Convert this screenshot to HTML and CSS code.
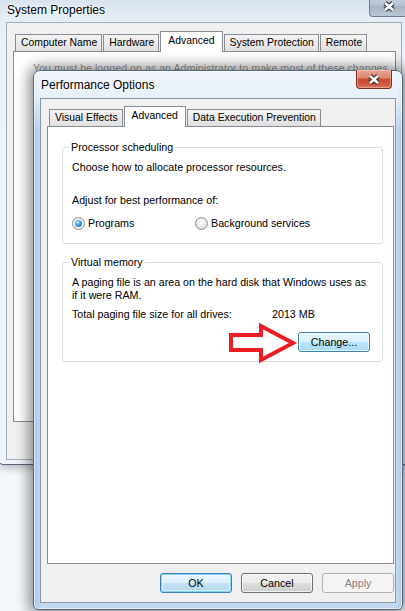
FILE: index.html
```html
<!DOCTYPE html>
<html lang="en">
<head>
    <meta charset="UTF-8">
    <meta name="viewport" content="width=device-width, initial-scale=1.0">
    <title>Performance Options</title>
    <link rel="stylesheet" href="styles.css">
</head>
<body>
    <div class="desktop">

        <!-- parent window, inactive -->
        <div class="window sysprops">
            <div class="titlebar">
                <span class="title">System Properties</span>
                <span class="close-btn">
                    <svg width="14" height="11" viewBox="0 0 14 11">
                        <path d="M3 2 L11 9 M11 2 L3 9" stroke="#3a4350" stroke-width="5" fill="none"/>
                        <path d="M3 2 L11 9 M11 2 L3 9" stroke="#fff" stroke-width="2.6" fill="none"/>
                    </svg>
                </span>
            </div>
            <div class="client">
                <div class="tabs">
                    <div class="tab">Computer Name</div>
                    <div class="tab">Hardware</div>
                    <div class="tab active">Advanced</div>
                    <div class="tab">System Protection</div>
                    <div class="tab">Remote</div>
                </div>
                <div class="tab-panel">
                    <p class="notice">You must be logged on as an Administrator to make most of these changes.</p>
                </div>
            </div>
        </div>

        <!-- active dialog -->
        <div class="window perf">
            <div class="titlebar">
                <span class="title">Performance Options</span>
                <span class="close-btn red">
                    <svg width="14" height="11" viewBox="0 0 14 11">
                        <path d="M3 2 L11 9 M11 2 L3 9" stroke="#3b2a28" stroke-width="5" fill="none"/>
                        <path d="M3 2 L11 9 M11 2 L3 9" stroke="#fff" stroke-width="2.6" fill="none"/>
                    </svg>
                </span>
            </div>
            <div class="client">
                <div class="tabs">
                    <div class="tab">Visual Effects</div>
                    <div class="tab active">Advanced</div>
                    <div class="tab">Data Execution Prevention</div>
                </div>
                <div class="tab-panel">
                    <fieldset class="group">
                        <legend>Processor scheduling</legend>
                        <p>Choose how to allocate processor resources.</p>
                        <p class="spaced">Adjust for best performance of:</p>
                        <div class="radio-row">
                            <label class="radio checked"><span class="radio-dot"></span>Programs</label>
                            <label class="radio"><span class="radio-dot"></span>Background services</label>
                        </div>
                    </fieldset>

                    <fieldset class="group vm">
                        <legend>Virtual memory</legend>
                        <p class="nowrap">A paging file is an area on the hard disk that Windows uses as<br>if it were RAM.</p>
                        <div class="size-row">
                            <span class="size-label">Total paging file size for all drives:</span>
                            <span>2013 MB</span>
                        </div>
                        <div class="change-row">
                            <svg class="arrow" width="74" height="44" viewBox="0 0 74 44">
                                <polygon points="5,14 35,14 35,5 67,22 35,39 35,29 5,29" fill="#fff" stroke="#ed1c24" stroke-width="4"/>
                            </svg>
                            <button class="btn hot">Change...</button>
                        </div>
                    </fieldset>
                </div>
                <div class="dialog-buttons">
                    <button class="btn default">OK</button>
                    <button class="btn">Cancel</button>
                    <button class="btn" disabled>Apply</button>
                </div>
            </div>
        </div>

    </div>
</body>
</html>
```

FILE: styles.css
```css
* {
    box-sizing: border-box;
}

body {
    margin: 0;
    font-family: "Liberation Sans", Arial, sans-serif;
    font-size: 10.7px;
    color: #000;
    background: #fff;
}

/* the screen */
.desktop {
    position: relative;
    width: 405px;
    height: 611px;
    overflow: hidden;
    background: #f3f8fc;
}

/* window frames (aero) */
.window {
    position: absolute;
    display: flex;
    flex-direction: column;
    border: 1px solid #57667a;
    border-radius: 7px 7px 5px 5px;
}

.sysprops {
    left: -2px;
    top: -8px;
    width: 412px;
    height: 473px;
    background: linear-gradient(to bottom, #d3dfeb 0, #e4edf6 24px, #ebf2f9 60px, #eef4fa 100%);
    box-shadow: 0 3px 8px rgba(0, 0, 0, 0.25);
}

.perf {
    left: 33px;
    top: 70px;
    width: 370px;
    height: 540px;
    background:
        linear-gradient(to bottom, rgba(255, 255, 255, 0.75) 0, rgba(255, 255, 255, 0.6) 27px, rgba(255, 255, 255, 0) 60px),
        linear-gradient(to right, #a9c9ec 0, #c3d8ef 7px, #c3d8ef 363px, #a9c9ec 100%);
    box-shadow: 0 0 14px 4px rgba(0, 0, 0, 0.45), inset 0 0 0 1px rgba(255, 255, 255, 0.55);
}

.titlebar {
    display: flex;
    justify-content: space-between;
    align-items: center;
    flex-shrink: 0;
}

.sysprops .titlebar {
    height: 29px;
    padding: 4px 0 0 8px;
}

.perf .titlebar {
    height: 27px;
    padding: 0 10px 0 7px;
}

.title {
    font-size: 12px;
    text-shadow: 0 0 6px #fff, 0 0 3px #fff;
}

.close-btn {
    align-self: flex-start;
    display: flex;
    align-items: center;
    justify-content: center;
    margin-top: -1px;
    border: 1px solid #6f7c8c;
    border-top: none;
    border-radius: 0 0 4px 4px;
}

.sysprops .close-btn {
    width: 40px;
    height: 21px;
    background: linear-gradient(to bottom, #c9d3de, #b4c0cd 50%, #a7b4c3 51%, #b9c6d4);
}

.close-btn.red {
    width: 36px;
    height: 19px;
    border-color: #7a2a1f;
    background: linear-gradient(to bottom, #e7a595 0, #db8672 45%, #c8482f 50%, #cf5a40 80%, #dc7b62 100%);
    box-shadow: inset 0 0 0 1px rgba(255, 210, 200, 0.45);
}

/* client area */
.client {
    flex: 1;
    display: flex;
    flex-direction: column;
    background: #f0f0f0;
    border: 1px solid #8796a8;
}

.sysprops .client {
    margin: 0 7px 4px 7px;
    padding: 8px 5px 37px 6px;
    border-color: #a2adba;
}

.perf .client {
    margin: 0 6px 6px 6px;
    padding: 7px 1px 9px 6px;
}

/* tabs */
.tabs {
    display: flex;
    align-items: flex-end;
    gap: 1px;
    height: 21px;
    margin: 0 0 -1px 2px;
    position: relative;
    z-index: 1;
}

.tab {
    height: 17px;
    margin-bottom: 1px;
    padding: 0 4px 0 5px;
    line-height: 15px;
    font-size: 10.4px;
    white-space: nowrap;
    border: 1px solid #898c95;
    border-bottom: none;
    background: linear-gradient(to bottom, #f4f4f4, #eaeaea 50%, #e0e0e0);
}

.tab.active {
    height: 21px;
    margin-bottom: 0;
    padding: 0 7px;
    line-height: 18px;
    background: #fff;
}

.tab-panel {
    flex: 1;
    background: #fff;
    border: 1px solid #898c95;
}

.sysprops .tab-panel {
    padding: 10px 0 0 19px;
}

.notice {
    margin: 0;
    white-space: nowrap;
    color: #444;
    opacity: 0.55;
}

.perf .tab-panel {
    padding: 14px 10px 0 14px;
}

/* group boxes */
.group {
    margin: 0;
    padding: 7px 12px 13px 9px;
    border: 1px solid #d5dfe5;
    border-radius: 3px;
    min-width: 0;
}

.group.vm {
    margin-top: 12px;
    padding-bottom: 9px;
}

.group legend {
    margin-left: -3px;
    padding: 0 2px;
    line-height: 13px;
}

.group p {
    margin: 0;
    line-height: 13px;
}

.group p.spaced {
    margin-top: 20px;
}

.nowrap {
    white-space: nowrap;
}

.radio-row {
    display: flex;
    margin-top: 10px;
    height: 13px;
    line-height: 13px;
}

.radio {
    display: flex;
    align-items: center;
    gap: 3px;
    flex: 0 0 123px;
}

.radio-dot {
    position: relative;
    width: 13px;
    height: 13px;
    border-radius: 50%;
    border: 1px solid #8e8f8f;
    background: radial-gradient(circle at 50% 40%, #fdfdfd 0, #e6e6e6 55%, #c9c9c9 100%);
}

.radio.checked .radio-dot {
    background: radial-gradient(circle, #ffffff 0, #f0f0f0 70%, #d5d5d5 100%);
}

.radio.checked .radio-dot::after {
    content: "";
    position: absolute;
    left: 2px;
    top: 2px;
    width: 7px;
    height: 7px;
    border-radius: 50%;
    background: radial-gradient(circle at 40% 35%, #b9ecff 0, #3a9de0 45%, #14579a 100%);
}

.size-row {
    display: flex;
    margin-top: 6px;
    line-height: 13px;
}

.size-label {
    width: 200px;
}

.change-row {
    position: relative;
    display: flex;
    justify-content: flex-end;
    margin-top: 11px;
}

.arrow {
    position: absolute;
    left: 154px;
    top: -11px;
}

/* push buttons */
.btn {
    width: 72px;
    height: 20px;
    padding: 0;
    font: inherit;
    color: #000;
    border: 1px solid #707070;
    border-radius: 3px;
    background: linear-gradient(to bottom, #f2f2f2 0, #ebebeb 50%, #dddddd 51%, #cfcfcf 100%);
    box-shadow: inset 0 0 0 1px rgba(255, 255, 255, 0.7);
}

.btn.hot {
    border-color: #3c7fb1;
    background: linear-gradient(to bottom, #eaf6fd 0, #d9f0fc 50%, #bee6fd 51%, #a7d9f5 100%);
}

.btn.default {
    border-color: #3c7fb1;
    background: linear-gradient(to bottom, #eaf6fd 0, #dbeef9 50%, #c4e2f3 51%, #b3d7ee 100%);
    box-shadow: inset 0 0 0 1px #7fd3f7, inset 0 0 0 2px rgba(255, 255, 255, 0.5);
}

.btn:disabled {
    color: #838383;
    border-color: #adb2b5;
    background: #f4f4f4;
    box-shadow: none;
}

.dialog-buttons {
    display: flex;
    justify-content: flex-end;
    gap: 9px;
    margin-top: 9px;
}
```
